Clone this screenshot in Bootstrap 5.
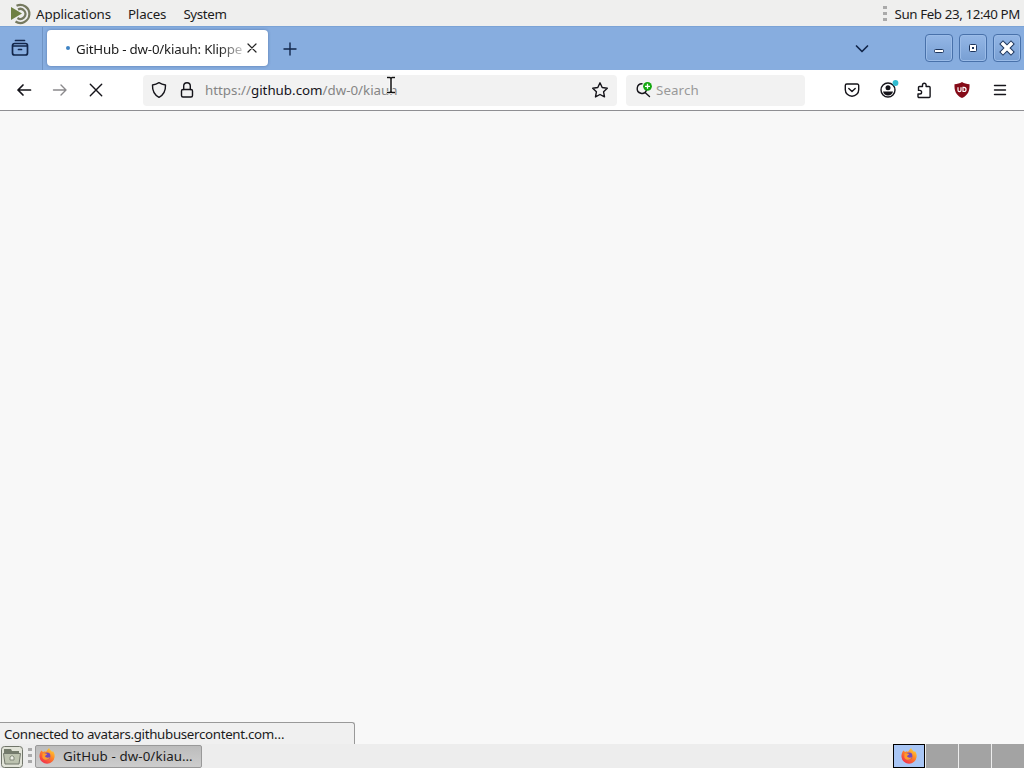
<!DOCTYPE html>
<html lang="en">
<head>
  <meta charset="UTF-8">
  <meta name="viewport" content="width=device-width, initial-scale=1.0">
  <title>GitHub - dw-0/kiauh</title>
  <link href="https://cdn.jsdelivr.net/npm/bootstrap@5.3.0/dist/css/bootstrap.min.css" rel="stylesheet">
  <style>
    body { font-family: "Noto Sans", sans-serif; font-size: 13.33px; line-height: 18px; color: #1c1c1c; background: #f8f8f8; }
    svg { display: block; flex-shrink: 0; overflow: visible; }
    .ln { fill: none; stroke: #15141a; stroke-width: 1.4; stroke-linecap: round; stroke-linejoin: round; }
    .tabs-bar .ln { stroke: #12264a; }

    .top-panel { height: 26px; background: #efefee; padding: 1px 4px 0 10px; }
    .top-panel .menus { gap: 17px; margin-left: 5px; letter-spacing: -.14px; }
    .menus span:last-child { letter-spacing: -.35px; }
    .clock { letter-spacing: -.39px; }
    .grip { width: 4px; height: 16px; background: repeating-linear-gradient(#aaa 0 3px, transparent 3px 6px); }

    .tabs-bar { height: 44px; background: #87addf; border-top: 1px solid #7ba3d6; padding-right: 3px; }
    .view-btn { width: 43px; height: 43px; padding-left: 11px; border-right: 1px solid #7094c4; }
    .view-btn svg, .page-tab, .win-btns { margin-top: -1px; }
    .page-tab { width: 221px; height: 36px; margin-left: 4px; padding: 0 12px 0 19px; background: #fff; border-radius: 4px; box-shadow: 0 0 3px rgba(30, 60, 110, .45); }
    .load-dot { width: 4px; height: 4px; border-radius: 50%; background: #3f83c4; }
    .tab-title { margin-left: 6px; letter-spacing: -.21px; padding-top: 1px; -webkit-mask-image: linear-gradient(90deg, #000 86%, rgba(0, 0, 0, .25)); mask-image: linear-gradient(90deg, #000 86%, rgba(0, 0, 0, .25)); }
    .win-btns { gap: 6px; margin-left: 57px; }
    .win-btn { width: 28px; height: 28px; border: 1px solid #4871aa; border-radius: 4px; background: linear-gradient(#94b7e6, #789fd3); box-shadow: inset 0 0 0 1px #9bbce8; }

    .tool-bar { height: 41px; background: #fff; border-bottom: 1px solid #8f8f93; padding-left: 16px; padding-right: 16px; }
    .url-box { width: 474px; height: 31px; margin-left: 41px; padding: 0 9px 0 8px; background: #f2f2f2; border-radius: 4px; color: #858585; }
    .url-text { margin-left: 10px; }
    .url-text b { font-weight: 400; color: #15141a; }
    .search-box { width: 179px; height: 31px; margin-left: 9px; padding-left: 9px; background: #f2f2f2; border-radius: 4px; color: #999; }
    .search-text { margin-left: 4px; letter-spacing: .1px; }
    .tools { gap: 20px; }

    .page-area { height: 633px; background: #f8f8f8; }
    .status-tip { width: 355px; height: 22px; padding: 2px 0 0 4px; letter-spacing: -.33px; background: #f0f0f0; border: 1px solid #999; border-width: 1px 1px 0 0; border-radius: 0 3px 0 0; }

    .task-bar { height: 24px; background: #ededed; }
    .task-btn { width: 167px; height: 23px; margin-left: 3px; padding-left: 3px; border: 1px solid #999; border-radius: 2px; background: linear-gradient(#bcbcbc, #cdcdcd); }
    .task-title { letter-spacing: .1px; }
    .desks { gap: 1px; }
    .desk { width: 32px; height: 24px; background: #a3a3a3; }
    .desk-on { border: 1px solid #000; background: #a9c6f5; }
    .ibeam { left: 385px; top: 76px; }
  </style>
</head>
<body class="overflow-hidden">
  <!-- shared logo -->
  <svg width="0" height="0" class="position-absolute">
    <defs>
      <linearGradient id="fireGrad" x1=".85" y1="0" x2=".2" y2="1">
        <stop offset="0" stop-color="#ffd936"/><stop offset=".45" stop-color="#ff8526"/><stop offset="1" stop-color="#f02750"/>
      </linearGradient>
      <symbol id="firefox" viewBox="0 0 16 16">
        <path fill="url(#fireGrad)" d="M2.5 2.5 4 4l2-.8L7 4c1-2 2-3 3.200-4 .1 2 2 2.300 3 4l.7-1c1.500 2 2 4 1.700 6A7.600 7.600 0 0 1 .5 9C.3 6.500 1 4 2.500 2.500z"/>
        <circle cx="8" cy="8" r="3.400" fill="#7548bc"/>
        <path fill="#ff9b2c" d="M3.500 5.600c2-.8 3 .1 4.700.4-.4 1.500-2.200 1-2.100 2.600.8 1.500 3.400 1.300 4.800.5-.8 3.100-6 3.900-7.600.1z"/>
      </symbol>
    </defs>
  </svg>

  <header class="top-panel d-flex align-items-center">
    <svg width="21" height="22" viewBox="0 0 21 22">
      <path d="M6.500 2.800A9 9 0 1 1 5.500 18.500" fill="none" stroke="#75795f" stroke-width="2.200"/>
      <path d="M8 6.500A5 5 0 1 1 7.500 15" fill="none" stroke="#75795f" stroke-width="2.200"/>
      <path d="M1 4 12 10.500 1 17z" fill="#6e8042"/>
    </svg>
    <nav class="menus d-flex">
      <span>Applications</span><span>Places</span><span>System</span>
    </nav>
    <div class="grip ms-auto"></div>
    <span class="clock text-nowrap" style="margin-left:7px">Sun Feb 23, 12:40 PM</span>
  </header>

  <div class="tabs-bar d-flex align-items-center">
    <div class="view-btn d-flex align-items-center">
      <svg class="ln" width="18" height="18" viewBox="0 0 18 18"><path d="M4.500 1.500h9M3.500 4.500h11a2 2 0 0 1 2 2V14a2 2 0 0 1-2 2h-11a2 2 0 0 1-2-2V6.500a2 2 0 0 1 2-2zM1.500 7h15M7.500 10.500h3" stroke-width="1.700"/></svg>
    </div>
    <div class="page-tab d-flex align-items-center">
      <span class="load-dot"></span>
      <span class="tab-title text-nowrap">GitHub - dw-0/kiauh: Klippe</span>
      <svg class="ln ms-auto" width="8" height="8" viewBox="0 0 8 8"><path d="m0 0 8 8M8 0 0 8" stroke="#222" stroke-width="1.200"/></svg>
    </div>
    <svg class="ln ms-3" width="12" height="12" viewBox="0 0 12 12"><path d="M6 0v12M0 6h12"/></svg>
    <svg class="ln ms-auto" width="12" height="6" viewBox="0 0 12 6"><path d="m.5 0 5.500 5.500L11.500 0" stroke-width="1.700"/></svg>
    <div class="win-btns d-flex">
      <div class="win-btn"><svg width="26" height="26"><rect x="8.500" y="14.500" width="9" height="3" rx="1" fill="#fff" stroke="#1d355c"/></svg></div>
      <div class="win-btn"><svg width="26" height="26"><rect x="9.500" y="9.500" width="7" height="7" rx="1" fill="#fff" stroke="#1d355c"/><path d="M12 12h2v2h-2z" fill="#1d355c"/></svg></div>
      <div class="win-btn"><svg width="26" height="26"><path d="m9 9 8 8m0-8-8 8" stroke="#1d355c" stroke-width="5.400" stroke-linecap="square"/><path d="m9 9 8 8m0-8-8 8" stroke="#fff" stroke-width="3.400" stroke-linecap="square"/></svg></div>
    </div>
  </div>

  <div class="tool-bar d-flex align-items-center">
    <svg class="ln" width="16" height="16" viewBox="0 0 16 16"><path d="M7 3 2 8l5 5M2 8h12.500" stroke-width="1.700"/></svg>
    <svg class="ln opacity-50" width="16" height="16" viewBox="0 0 16 16" style="margin-left:20px"><path d="M9 3l5 5-5 5M14 8H1.500"/></svg>
    <svg class="ln" width="12" height="12" viewBox="0 0 12 12" style="margin-left:22px"><path d="m.3.300 11.400 11.400M11.700.3.300 11.700"/></svg>
    <div class="url-box d-flex align-items-center">
      <svg class="ln" width="16" height="16" viewBox="0 0 16 16"><path d="M8 .7c2 1.300 4 2 6.500 2.300.2 5-1.700 9.800-6.500 12.300C3.200 12.800 1.300 8 1.500 3 4 2.700 6 2 8 .7z"/></svg>
      <svg class="ln" width="16" height="16" viewBox="0 0 16 16" style="margin-left:12px"><rect x="2.500" y="7.500" width="11" height="7.500" rx="1.500"/><path d="M4.700 7.500V4a3.300 3.300 0 0 1 6.600 0v3.500"/></svg>
      <span class="url-text">https://<b>github.com</b>/dw-0/kiauh</span>
      <svg class="ln ms-auto" width="16" height="16" viewBox="0 0 16 16"><path d="m8 .8 2.200 4.700 5.100.7-3.700 3.600.9 5.100L8 12.500l-4.500 2.400.9-5.100L.7 6.200l5.100-.7z"/></svg>
    </div>
    <div class="search-box d-flex align-items-center">
      <svg width="17" height="17" viewBox="0 0 17 17">
        <path class="ln" d="M10 10.500 14.500 14.500M7 1.800a4.800 4.800 0 1 0 4.500 6.500" stroke-width="1.500"/>
        <circle cx="12.500" cy="4.300" r="4.400" fill="#12a70e"/><path d="M12.500 1.800v5M10 4.300h5" stroke="#fff" stroke-width="1.300"/>
      </svg>
      <span class="search-text">Search</span>
    </div>
    <div class="tools d-flex align-items-center ms-auto">
      <svg class="ln" width="16" height="16" viewBox="0 0 16 16"><path d="M2.800 2h10.400a1.500 1.500 0 0 1 1.500 1.500v4.200a6.700 6.500 0 0 1-13.400 0V3.500A1.500 1.500 0 0 1 2.800 2zM4.800 6.500 8 9.500l3.200-3"/></svg>
      <svg width="16" height="16" viewBox="0 0 16 16"><circle class="ln" cx="8" cy="8" r="7" stroke-width="1.700"/><circle cx="8" cy="5.700" r="2.500" fill="#15141a"/><path d="M3 9.500h10c-.6 2.400-2.500 4-5 4s-4.400-1.600-5-4z" fill="#15141a"/><circle cx="15.500" cy="1" r="2.900" fill="#31bcd0"/></svg>
      <!-- extensions -->
      <svg class="ln" width="16" height="16" viewBox="0 0 16 16"><path d="M2.500 7V5.500a1 1 0 0 1 1-1H6.500V3a1.800 1.800 0 0 1 3.600 0v1.500h3a1 1 0 0 1 1 1v9a1 1 0 0 1-1 1H3a1 1 0 0 1-1-1V12h1.800a1.800 1.800 0 0 0 0-3.600H2.500z"/></svg>
      <svg width="16" height="16" viewBox="0 0 16 16" style="margin-left:2px"><path d="M8 0c2.300 1.400 4.600 2 7.500 2.200.3 6.200-1.200 11-7.500 13.800C1.700 13.200.2 8.400.5 2.200 3.400 2 5.700 1.400 8 0z" fill="#850b18"/><path d="M4 5.300v2.900c0 1.800 3 1.800 3 0V5.300M9 5.300v4.200h1c2.700 0 2.700-4.200 0-4.200z" fill="none" stroke="#fff" stroke-width="1.200"/></svg>
      <svg class="ln" width="16" height="16" viewBox="0 0 16 16" style="margin-left:2px"><path d="M2.500 3.500h11M2.500 8h11M2.500 12.500h11"/></svg>
    </div>
  </div>

  <main class="page-area d-flex align-items-end">
    <div class="status-tip text-nowrap">Connected to avatars.githubusercontent.com…</div>
  </main>

  <footer class="task-bar d-flex align-items-center">
    <svg width="24" height="23" viewBox="0 0 24 23">
      <rect x="1.500" y="1.500" width="21" height="21" rx="3" fill="#e2e4d9" stroke="#70756a"/>
      <path d="M4 6V4h7l1 2h7v3H4z" fill="#747b6c"/><path d="M3.500 8.500h17L19 19H5z" fill="#bdc3b0" stroke="#73796d"/>
      <path d="m10 12 2-1.500 2 1.500v3h-4z" fill="#eef0e8" stroke="#82887a"/>
    </svg>
    <div class="grip ms-1"></div>
    <div class="task-btn d-flex align-items-center">
      <svg width="16" height="16"><use href="#firefox"/></svg>
      <span class="task-title ms-2">GitHub - dw-0/kiau…</span>
    </div>
    <div class="desks d-flex ms-auto">
      <div class="desk desk-on d-flex align-items-center justify-content-center"><svg width="16" height="16"><use href="#firefox"/></svg></div>
      <div class="desk"></div><div class="desk"></div><div class="desk"></div>
    </div>
  </footer>

  <svg class="ibeam position-absolute" width="12" height="19" viewBox="0 0 12 19">
    <path d="M2 1.500h3l1 1 1-1h3M6 2.500v13M2 16.500h3l1-1 1 1h3" fill="none" stroke="#fff" stroke-width="3"/>
    <path d="M2 1.500h3l1 1 1-1h3M6 2.500v13M2 16.500h3l1-1 1 1h3" fill="none" stroke="#111" stroke-width="1.500"/>
  </svg>

  <script src="https://cdn.jsdelivr.net/npm/bootstrap@5.3.0/dist/js/bootstrap.bundle.min.js"></script>
</body>
</html>
